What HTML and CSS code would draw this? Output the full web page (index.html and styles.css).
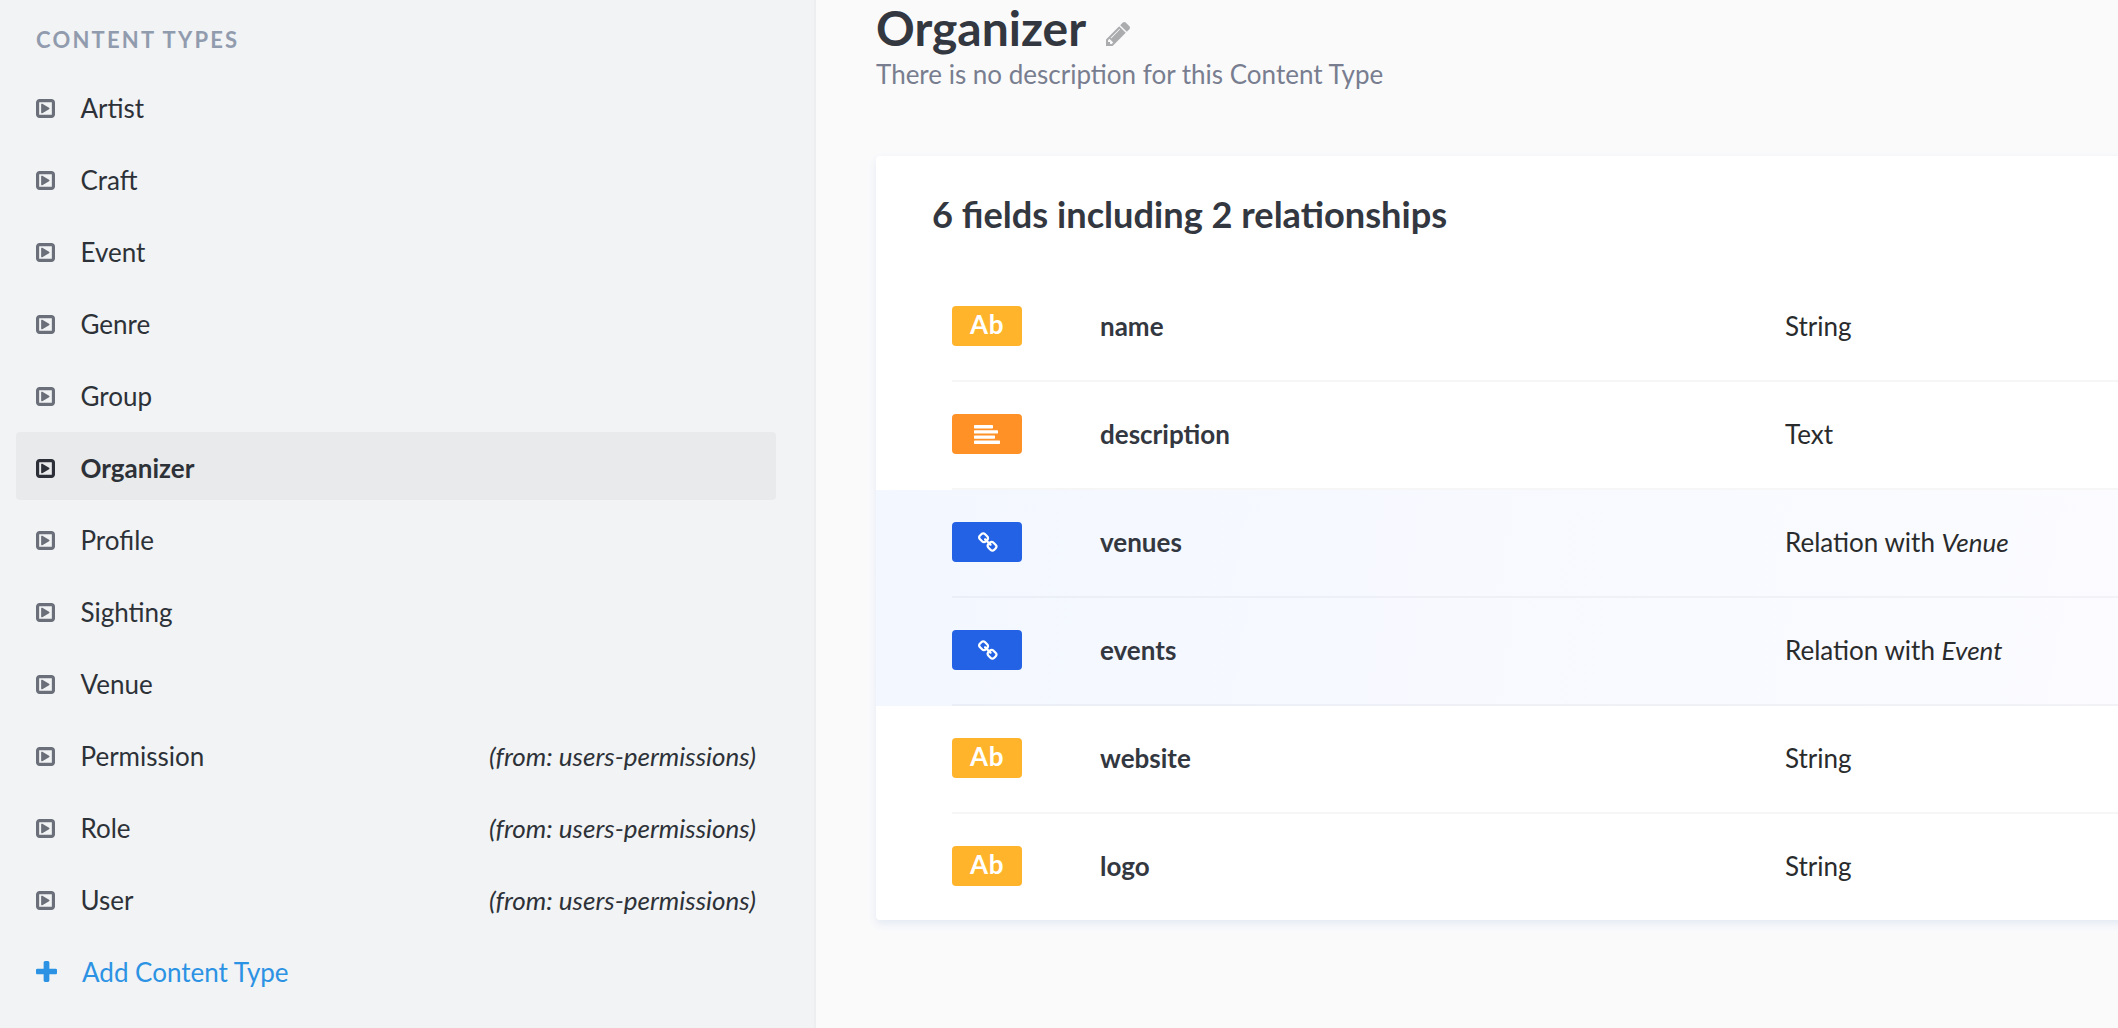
FILE: index.html
```html
<!DOCTYPE html>
<html lang="en">
<head>
<meta charset="utf-8">
<title>Content Type Builder</title>
<link rel="stylesheet" href="styles.css">
</head>
<body>
<svg class="defs" aria-hidden="true">
  <symbol id="play" viewBox="0 0 1536 1536"><path d="M1088 768q0 37-32 55L512 1143q-15 9-32 9-16 0-32-8-32-19-32-56V448q0-37 32-56 33-18 64 1l544 320q32 18 32 55zM1280 1248V288q0-14-9-23t-23-9H288q-14 0-23 9t-9 23v960q0 14 9 23t23 9h960q14 0 23-9t9-23zM1536 288v960q0 119-84 204t-204 84H288q-119 0-204-84T0 1248V288Q0 169 84 84T288 0h960q119 0 204 84t84 204z" fill-rule="evenodd"/></symbol>
  <symbol id="plus" viewBox="0 0 1408 1408"><path d="M1408 608v192q0 40-28 68t-68 28H896v416q0 40-28 68t-68 28H608q-40 0-68-28t-28-68V896H96q-40 0-68-28T0 800V608q0-40 28-68t68-28h416V96q0-40 28-68t68-28h192q40 0 68 28t28 68v416h416q40 0 68 28t28 68z"/></symbol>
  <symbol id="pencil" viewBox="0 0 1515 1515"><path d="M363 1387l91-91-235-235-91 91v107h128v128h107zM886 459q0-22-22-22-10 0-17 7l-542 542q-7 7-7 17 0 22 22 22 10 0 17-7l542-542q7-7 7-17zM832 267l416 416-832 832H0v-416zM1515 363q0 53-37 90l-166 166-416-416 166-165q36-38 90-38 53 0 91 38l235 234q37 39 37 91z" fill-rule="evenodd"/></symbol>
  <symbol id="text" viewBox="0 0 26 19"><rect width="19" height="3.4" rx=".7"/><rect y="5.2" width="24" height="3.4" rx=".7"/><rect y="10.4" width="21" height="3.4" rx=".7"/><rect y="15.6" width="26" height="3.4" rx=".7"/></symbol>
  <symbol id="link" viewBox="-32 -48 1664 1632"><path d="M1408 1152q0-40-28-68l-208-208q-28-28-68-28-42 0-72 32 3 3 19 18.500t21.500 21.500 15 19 13 25.500 3.500 27.500q0 40-28 68t-68 28q-15 0-27.500-3.500t-25.500-13-19-15-21.500-21.500-18.500-19q-33 31-33 73 0 40 28 68l206 207q27 27 68 27 40 0 68-26l147-146q28-28 28-67zM705 447q0-40-28-68L471 172q-28-28-68-28-39 0-68 27L188 317q-28 28-28 67 0 40 28 68l208 208q27 27 68 27 42 0 72-31-3-3-19-18.500T495.500 616t-15-19-13-25.500T464 544q0-40 28-68t68-28q15 0 27.500 3.500t25.500 13 19 15 21.500 21.500 18.500 19q33-31 33-74zM1600 1152q0 120-85 203l-147 146q-83 83-203 83-121 0-204-85l-206-207q-83-83-83-203 0-123 88-209l-88-88q-86 88-208 88-120 0-204-84L52 588Q-32 504-32 384t85-203L200 35q83-83 203-83 121 0 204 85l206 207q83 83 83 203 0 123-88 209l88 88q86-88 208-88 120 0 204 84l208 208q84 84 84 204z" fill-rule="evenodd"/></symbol>
</svg>
<div class="page">
  <aside class="sidebar">
    <h2 class="sidebar-title">Content Types</h2>
    <ul class="menu">
      <li class="item"><svg class="icon"><use href="#play"/></svg><span>Artist</span></li>
      <li class="item"><svg class="icon"><use href="#play"/></svg><span>Craft</span></li>
      <li class="item"><svg class="icon"><use href="#play"/></svg><span>Event</span></li>
      <li class="item"><svg class="icon"><use href="#play"/></svg><span>Genre</span></li>
      <li class="item"><svg class="icon"><use href="#play"/></svg><span>Group</span></li>
      <li class="item active"><svg class="icon"><use href="#play"/></svg><span>Organizer</span></li>
      <li class="item"><svg class="icon"><use href="#play"/></svg><span>Profile</span></li>
      <li class="item"><svg class="icon"><use href="#play"/></svg><span>Sighting</span></li>
      <li class="item"><svg class="icon"><use href="#play"/></svg><span>Venue</span></li>
      <li class="item"><svg class="icon"><use href="#play"/></svg><span>Permission</span><em class="source">(from: users-permissions)</em></li>
      <li class="item"><svg class="icon"><use href="#play"/></svg><span>Role</span><em class="source">(from: users-permissions)</em></li>
      <li class="item"><svg class="icon"><use href="#play"/></svg><span>User</span><em class="source">(from: users-permissions)</em></li>
      <li class="item add"><svg class="icon"><use href="#plus"/></svg><span>Add Content Type</span></li>
    </ul>
  </aside>
  <main class="content">
    <h1 class="title">Organizer<svg class="edit"><use href="#pencil"/></svg></h1>
    <p class="subtitle">There is no description for this Content Type</p>
    <section class="card">
      <h3 class="card-title">6 fields including 2 relationships</h3>
      <ul class="fields">
        <li class="field"><div class="row"><span class="badge string">Ab</span><b class="name">name</b><span class="type">String</span></div></li>
        <li class="field"><div class="row"><span class="badge text"><svg class="text-icon"><use href="#text"/></svg></span><b class="name">description</b><span class="type">Text</span></div></li>
        <li class="field relation"><div class="row"><span class="badge link"><svg class="link-icon"><use href="#link"/></svg></span><b class="name">venues</b><span class="type">Relation with <em>Venue</em></span></div></li>
        <li class="field relation"><div class="row"><span class="badge link"><svg class="link-icon"><use href="#link"/></svg></span><b class="name">events</b><span class="type">Relation with <em>Event</em></span></div></li>
        <li class="field"><div class="row"><span class="badge string">Ab</span><b class="name">website</b><span class="type">String</span></div></li>
        <li class="field"><div class="row"><span class="badge string">Ab</span><b class="name">logo</b><span class="type">String</span></div></li>
      </ul>
    </section>
  </main>
</div>
</body>
</html>
```

FILE: styles.css
```css
* { box-sizing: border-box; }
body {
  margin: 0;
  font: 26px/36px Lato, sans-serif;
  color: #292b2c;
  background: #fafafb;
  overflow: hidden;
}
h1, h2, h3, p, ul { margin: 0; padding: 0; }
ul { list-style: none; }
svg { fill: currentColor; flex: none; overflow: visible; }
.defs { display: none; }
.page { display: flex; height: 1028px; }

.sidebar {
  flex: none;
  width: 816px;
  padding: 22px 38px 0 16px;
  background: #f2f3f4;
  border-right: 2px solid #eceef0;
}
.sidebar-title {
  padding-left: 20px;
  height: 50px;
  font-size: 22px;
  font-weight: 700;
  letter-spacing: 2.2px;
  text-transform: uppercase;
  color: #919bae;
}
.menu { display: flex; flex-direction: column; gap: 4px; }
.item {
  display: flex;
  align-items: center;
  height: 68px;
  padding: 4px 20px 0;
  border-radius: 4px;
  color: #2d3138;
}
.icon { width: 19px; height: 19px; margin-right: 25.5px; color: #6b6f79; }
.source { margin-left: auto; }
.active { background: #e9eaeb; font-weight: 700; }
.active .icon { color: #2d2f38; }
.add { color: #2b92e4; }
.add .icon { width: 21px; height: 21px; margin: -1px 25px 0 0; color: inherit; }

.content { flex: none; width: 1400px; padding-left: 60px; }
.title {
  display: flex;
  align-items: center;
  height: 56px;
  font-size: 48px;
  font-weight: 700;
  line-height: 56px;
  color: #333740;
}
.edit { width: 24px; height: 24px; margin: 12px 0 0 20px; color: #aaacae; }
.subtitle { height: 100px; color: #787e8f; }
.card {
  height: 764px;
  padding-top: 36px;
  background: #fff;
  border-radius: 4px;
  box-shadow: 0 4px 8px #e3e9f3;
}
.card-title {
  height: 82px;
  padding-left: 56px;
  font-size: 36.2px;
  font-weight: 700;
  line-height: 44px;
  color: #333740;
}
.field { height: 108px; padding-left: 76px; }
.relation { background: linear-gradient(100deg, #f3f7ff, #fcfcff); }
.row {
  display: flex;
  align-items: center;
  height: 108px;
  padding-bottom: 2px;
  border-bottom: 2px solid rgba(14, 22, 34, .04);
}
.field:last-child .row { border-bottom-color: transparent; }
.badge {
  display: flex;
  align-items: center;
  justify-content: center;
  width: 70px;
  height: 40px;
  border-radius: 4px;
  color: #fff;
}
.string {
  padding-bottom: 4px;
  background: #ffb42b;
  font-weight: 700;
  letter-spacing: .6px;
}
.text { background: #ff9127; }
.link { background: #2362e4; }
.text-icon { width: 26px; height: 19px; }
.link-icon { width: 20px; height: 20px; margin-left: 2px; }
.name { width: 685px; margin-left: 78px; font-weight: 700; color: #333740; }
```
